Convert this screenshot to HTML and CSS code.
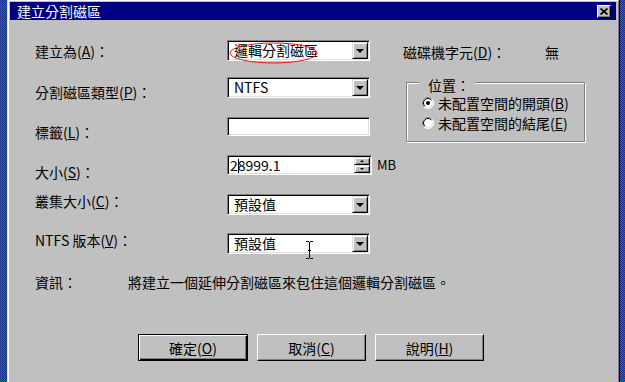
FILE: index.html
```html
<!DOCTYPE html>
<html>
<head>
<meta charset="UTF-8">
<title>建立分割磁區</title>
<link rel="stylesheet" href="styles.css">
</head>
<body>
<div class="window">
	<div class="frame">
		<div class="titlebar">
			<span class="title">建立分割磁區</span>
			<div class="close">
				<svg width="8" height="7" viewBox="0 0 8 7"><path d="M0.5 0.5 L7.5 6.5 M7.5 0.5 L0.5 6.5" stroke="#000" stroke-width="1.7" fill="none"/></svg>
			</div>
		</div>

		<div class="content">
			<div class="top">
				<!-- 왼쪽 입력 영역 -->
				<div class="form">
					<div class="row r1">
						<div class="label">建立為(<u>A</u>)：</div>
						<div class="combo">
							<div class="value">邏輯分割磁區</div>
							<div class="drop"><i></i></div>
							<svg class="mark" width="89" height="23" viewBox="0 0 89 23"><ellipse cx="44.5" cy="11" rx="43.5" ry="10" stroke="#e8141c" stroke-width="1" fill="none"/></svg>
						</div>
					</div>
					<div class="row r2">
						<div class="label">分割磁區類型(<u>P</u>)：</div>
						<div class="combo">
							<div class="value">NTFS</div>
							<div class="drop"><i></i></div>
						</div>
					</div>
					<div class="row r3">
						<div class="label">標籤(<u>L</u>)：</div>
						<div class="field"></div>
					</div>
					<div class="row r4">
						<div class="label">大小(<u>S</u>)：</div>
						<div class="spin">
							<div class="value num">2<span class="caret"></span>8999.1</div>
							<div class="spin-btns">
								<div class="sbtn"><i class="up"></i></div>
								<div class="sbtn"><i class="down"></i></div>
							</div>
						</div>
						<span class="unit">MB</span>
					</div>
					<div class="row r5">
						<div class="label">叢集大小(<u>C</u>)：</div>
						<div class="combo">
							<div class="value">預設值</div>
							<div class="drop"><i></i></div>
						</div>
					</div>
					<div class="row r6">
						<div class="label">NTFS 版本(<u>V</u>)：</div>
						<div class="combo">
							<div class="value">預設值</div>
							<div class="drop"><i></i></div>
							<svg class="ibeam" width="9" height="18" viewBox="0 0 9 18"><path d="M1 0.5H4 M5 0.5H8 M4.5 1V17 M1 17.5H4 M5 17.5H8 M3 9.5H6" stroke="#000" stroke-width="1" fill="none"/></svg>
						</div>
					</div>
				</div>

				<!-- 오른쪽 영역 -->
				<div class="side">
					<div class="drive">
						<span class="drive-label">磁碟機字元(<u>D</u>)：</span>
						<span>無</span>
					</div>
					<fieldset class="group">
						<legend>位置：</legend>
						<div class="radio">
							<svg width="12" height="12" viewBox="0 0 12 12">
								<circle cx="6" cy="6" r="5.5" fill="#fff" stroke="#fff"/>
								<path d="M2.1 9.9 A5.5 5.5 0 0 1 9.9 2.1" stroke="#808080" fill="none"/>
								<circle cx="6" cy="6" r="4.5" fill="#fff" stroke="#dfdfdf"/>
								<path d="M2.8 9.2 A4.5 4.5 0 0 1 9.2 2.8" stroke="#000" fill="none"/>
								<circle cx="6" cy="6" r="2" fill="#000"/>
							</svg>
							<span>未配置空間的開頭(<u>B</u>)</span>
						</div>
						<div class="radio">
							<svg width="12" height="12" viewBox="0 0 12 12">
								<circle cx="6" cy="6" r="5.5" fill="#fff" stroke="#fff"/>
								<path d="M2.1 9.9 A5.5 5.5 0 0 1 9.9 2.1" stroke="#808080" fill="none"/>
								<circle cx="6" cy="6" r="4.5" fill="#fff" stroke="#dfdfdf"/>
								<path d="M2.8 9.2 A4.5 4.5 0 0 1 9.2 2.8" stroke="#000" fill="none"/>
							</svg>
							<span>未配置空間的結尾(<u>E</u>)</span>
						</div>
					</fieldset>
				</div>
			</div>

			<div class="info">
				<div class="info-label">資訊：</div>
				<div>將建立一個延伸分割磁區來包住這個邏輯分割磁區。</div>
			</div>

			<div class="buttons">
				<div class="btn default"><span>確定(<u>O</u>)</span></div>
				<div class="btn"><span>取消(<u>C</u>)</span></div>
				<div class="btn"><span>說明(<u>H</u>)</span></div>
			</div>
		</div>
	</div>
</div>
</body>
</html>
```

FILE: styles.css
```css
html, body {
	margin: 0;
	padding: 0;
}

body {
	height: 382px;
	overflow: hidden;
	padding-left: 7px;
	box-sizing: border-box;
	/* 바탕화면 체크 무늬 */
	background: repeating-conic-gradient(#17862c 0 25%, #182e86 0 50%) 0 0 / 2px 2px;
	font-family: "Noto Sans CJK TC", "Noto Sans CJK SC", sans-serif;
	font-size: 14px;
	color: #000;
}

u {
	text-decoration: underline;
	text-underline-offset: 1px;
}

.window {
	width: 613px;
	height: 400px;
	margin-top: -1px;
	box-sizing: border-box;
	background: #c0c0c0;
	border: 1px solid;
	border-color: #dfdfdf #000 #000 #dfdfdf;
}

.frame {
	height: 100%;
	box-sizing: border-box;
	border: 1px solid;
	border-color: #fff #808080 #808080 #fff;
	padding: 1px 2px 0 1px;
}

/* 제목 표시줄 */
.titlebar {
	height: 18px;
	background: #000080;
	display: flex;
	align-items: center;
	justify-content: space-between;
	padding-left: 7px;
}

.title {
	color: #fff;
	line-height: 18px;
}

.close {
	width: 14px;
	height: 13px;
	box-sizing: border-box;
	margin-right: 5px;
	background: #c0c0c0;
	border: 1px solid;
	border-color: #fff #000 #000 #fff;
	box-shadow: inset -1px -1px #808080;
	display: flex;
	align-items: center;
	justify-content: center;
}

.top {
	display: flex;
	align-items: flex-start;
}

.form {
	width: 393px;
	box-sizing: border-box;
	padding-left: 25px;
}

.row {
	display: flex;
	align-items: flex-start;
	margin-top: 19px;
	height: 21px;
}

.label {
	width: 192px;
	flex-shrink: 0;
	line-height: 16px;
	white-space: nowrap;
}

.r1 { margin-top: 20px; }
.r1 .label { margin-top: 3px; }
.r2 { margin-top: 16px; }
.r2 .label { margin-top: 7px; }
.r3 { height: 19px; }
.r3 .label { margin-top: 7px; }
.r4 { height: 20px; }
.r4 .label { margin-top: 9px; }
.r5 .label { margin-top: -1px; }
.r6 { margin-top: 18px; }
.r6 .label { margin-top: -1px; }

/* 움푹 들어간 입력 상자 */
.combo, .field, .spin {
	position: relative;
	box-sizing: border-box;
	background: #fff;
	border: 1px solid;
	border-color: #808080 #fff #fff #808080;
	box-shadow: inset 1px 1px #000, inset -1px -1px #dfdfdf;
	padding: 1px;
	display: flex;
}

.combo {
	width: 143px;
	height: 21px;
}

.field {
	width: 143px;
	height: 19px;
}

.spin {
	width: 145px;
	height: 20px;
}

.value {
	flex: 1;
	padding-left: 5px;
	line-height: 17px;
	white-space: nowrap;
}

.num {
	padding-left: 1px;
	line-height: 16px;
}

.caret {
	display: inline-block;
	width: 1px;
	height: 14px;
	margin-right: -1px;
	background: #000;
	vertical-align: -2px;
}

.drop {
	width: 16px;
	height: 17px;
	box-sizing: border-box;
	background: #c0c0c0;
	border: 1px solid;
	border-color: #dfdfdf #000 #000 #dfdfdf;
	box-shadow: inset 1px 1px #fff, inset -1px -1px #808080;
	display: flex;
	align-items: center;
	justify-content: center;
}

.drop i {
	width: 0;
	height: 0;
	border-left: 4px solid transparent;
	border-right: 4px solid transparent;
	border-top: 4px solid #000;
}

.spin-btns {
	width: 16px;
	display: flex;
	flex-direction: column;
}

.sbtn {
	flex: 1;
	box-sizing: border-box;
	background: #c0c0c0;
	border: 1px solid;
	border-color: #dfdfdf #000 #000 #dfdfdf;
	box-shadow: inset 1px 1px #fff, inset -1px -1px #808080;
	display: flex;
	align-items: center;
	justify-content: center;
}

.sbtn i {
	width: 0;
	height: 0;
	border-left: 2px solid transparent;
	border-right: 2px solid transparent;
}

.sbtn .up { border-bottom: 2px solid #000; }
.sbtn .down { border-top: 2px solid #000; }

.unit {
	margin-left: 5px;
	line-height: 20px;
	font-size: 13px;
}

.mark {
	position: absolute;
	left: 1px;
	top: 1px;
	pointer-events: none;
}

.ibeam {
	position: absolute;
	left: 77px;
	top: 7px;
}

/* 오른쪽 영역 */
.side {
	display: flex;
	flex-direction: column;
}

.drive {
	margin-top: 24px;
	line-height: 16px;
	display: flex;
}

.drive-label {
	width: 142px;
}

.group {
	width: 179px;
	height: 70px;
	box-sizing: border-box;
	margin: 12px 0 0 3px;
	padding: 0 0 0 12px;
	border: 1px solid #808080;
	box-shadow: inset 1px 1px #fff, 1px 1px #fff;
}

.group legend {
	padding: 6px 5px 0 9px;
	line-height: 14px;
	background: #c0c0c0;
}

.radio {
	display: flex;
	align-items: center;
	gap: 4px;
	line-height: 16px;
	margin-left: 3px;
	margin-top: 4px;
}

.radio:first-of-type {
	margin-top: 3px;
}

/* 안내 문구 */
.info {
	display: flex;
	margin-top: 20px;
	padding-left: 25px;
	line-height: 16px;
}

.info-label {
	width: 93px;
}

/* 하단 버튼 */
.buttons {
	display: flex;
	gap: 9px;
	margin-top: 44px;
	padding-left: 128px;
}

.btn {
	width: 109px;
	height: 27px;
	box-sizing: border-box;
	background: #c0c0c0;
	border: 1px solid;
	border-color: #fff #000 #000 #fff;
	box-shadow: inset -1px -1px #808080;
	display: flex;
	align-items: center;
	justify-content: center;
	line-height: 16px;
}

.btn.default {
	width: 110px;
	border: 1px solid #000;
	box-shadow: inset 1px 1px #fff, inset -1px -1px #000, inset -2px -2px #808080;
}
```
